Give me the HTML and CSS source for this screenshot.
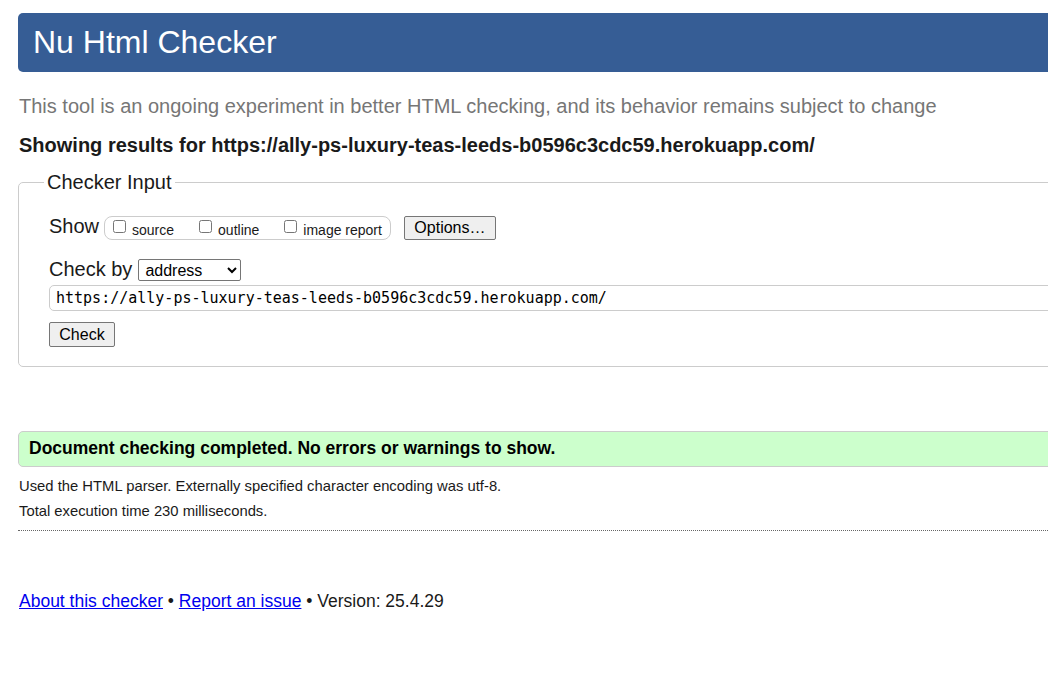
FILE: index.html
```html
<!DOCTYPE html>
<html lang="en">
<head>
<meta charset="utf-8">
<title>Nu Html Checker</title>
<link rel="stylesheet" href="styles.css">
</head>
<body>
<div class="page">
  <h1 class="masthead">Nu Html Checker</h1>
  <p class="tagline">This tool is an ongoing experiment in better HTML checking, and its behavior remains subject to change</p>
  <p class="showing">Showing results for https://ally-ps-luxury-teas-leeds-b0596c3cdc59.herokuapp.com/</p>
  <fieldset class="checker">
    <legend class="legend">Checker Input</legend>
    <div class="inner">
      <div class="row show-row">
        <span class="big-label">Show</span>
        <span class="opts">
          <label class="opt"><input type="checkbox" class="cb"><span>source</span></label>
          <label class="opt"><input type="checkbox" class="cb"><span>outline</span></label>
          <label class="opt"><input type="checkbox" class="cb"><span>image report</span></label>
        </span>
        <button class="btn options-btn" type="button">Options…</button>
      </div>
      <div class="row by-row">
        <span class="big-label">Check by</span>
        <select class="sel"><option>address</option></select>
      </div>
      <input class="url" type="text" value="https://ally-ps-luxury-teas-leeds-b0596c3cdc59.herokuapp.com/">
      <div class="row"><button class="btn check-btn" type="button">Check</button></div>
    </div>
  </fieldset>
  <p class="success">Document checking completed. No errors or warnings to show.</p>
  <p class="details">Used the HTML parser. Externally specified character encoding was utf-8.</p>
  <p class="details">Total execution time 230 milliseconds.</p>
  <hr class="rule">
  <p class="footer"><a href="#">About this checker</a> • <a href="#">Report an issue</a> • Version: 25.4.29</p>
</div>
</body>
</html>
```

FILE: styles.css
```css
html {
  overflow: hidden;
  background: #ffffff;
}
body {
  margin: 0;
  font-family: "Liberation Sans", Arial, sans-serif;
  color: #1a1a1a;
}
.page {
  width: 1120px;
  padding: 13px 0 0 18px;
}
.masthead {
  margin: 0;
  height: 59px;
  line-height: 59px;
  padding-left: 15px;
  background: #365d95;
  color: #ffffff;
  font-size: 32px;
  font-weight: normal;
  border-radius: 5px 0 0 5px;
}
.tagline {
  margin: 22px 0 0 1px;
  font-size: 20px;
  line-height: 24px;
  color: #767676;
}
.showing {
  margin: 15px 0 0 1px;
  font-size: 20px;
  line-height: 24px;
  font-weight: bold;
  color: #1a1a1a;
}
.checker {
  margin: 13px 0 0 0;
  padding: 0;
  border: 1px solid #cccccc;
  border-radius: 5px 0 0 5px;
  height: 197px;
  box-sizing: border-box;
  min-width: 0;
}
.legend {
  margin-left: 25px;
  padding: 0 3px;
  font-size: 20px;
  line-height: 24px;
  color: #1a1a1a;
}
.inner {
  padding: 22px 0 0 30px;
  display: flex;
  flex-direction: column;
  align-items: flex-start;
}
.row {
  display: flex;
  align-items: center;
}
.big-label {
  font-size: 20px;
  line-height: 24px;
}
.show-row {
  height: 24px;
}
.show-row .big-label {
  margin-top: -4px;
}
.opts {
  display: flex;
  align-items: center;
  margin-left: 5px;
  height: 22px;
  border: 1px solid #cccccc;
  border-radius: 8px;
  padding: 0 8px 0 8px;
  gap: 25px;
}
.opt {
  display: flex;
  align-items: center;
  font-size: 14px;
  line-height: 16px;
  gap: 6px;
}
.opt span {
  margin-top: 3px;
}
.cb {
  margin: 0;
  width: 13px;
  height: 13px;
  margin-top: -4px;
}
.btn {
  font-family: "Liberation Sans", Arial, sans-serif;
  font-size: 16px;
  color: #000000;
  background: #efefef;
  border: 1px solid #767676;
  border-radius: 2px;
  height: 25px;
  padding: 0 7px;
  line-height: 20px;
}
.options-btn {
  margin-left: 13px;
  width: 92px;
  height: 24px;
}
.by-row {
  margin-top: 19px;
  height: 24px;
}
.by-row .big-label {
  margin-top: -4px;
}
.sel {
  align-self: flex-start;
  margin-left: 6px;
  width: 103px;
  height: 22px;
  font-family: "Liberation Sans", Arial, sans-serif;
  font-size: 16px;
  color: #000000;
  background: #ffffff;
  border: 1px solid #767676;
  border-radius: 2px;
  padding: 0 0 0 2px;
}
.url {
  margin-top: 2px;
  width: 1060px;
  height: 26px;
  box-sizing: border-box;
  border: 1px solid #cccccc;
  border-radius: 5px;
  padding: 0 6px;
  font-family: "DejaVu Sans Mono", "Liberation Mono", monospace;
  font-size: 15px;
  color: #000000;
}
.check-btn {
  margin-top: 11px;
  width: 66px;
}
.success {
  margin: 64px 0 0 0;
  height: 36px;
  box-sizing: border-box;
  line-height: 33px;
  padding-left: 10px;
  background: #ccffcc;
  border: 1px solid #cccccc;
  border-radius: 5px 0 0 5px;
  font-size: 17.5px;
  font-weight: bold;
  color: #000000;
}
.details {
  margin: 9px 0 0 1px;
  font-size: 14.8px;
  line-height: 16px;
  color: #1a1a1a;
}
.success + .details {
  margin-top: 11px;
}
.rule {
  margin: 11px 0 0 0;
  border: 0;
  border-top: 1px dotted #666666;
  height: 0;
}
.footer {
  margin: 59px 0 0 1px;
  font-size: 17.5px;
  line-height: 22px;
  color: #1a1a1a;
}
.footer a {
  color: #0000ee;
}
```
